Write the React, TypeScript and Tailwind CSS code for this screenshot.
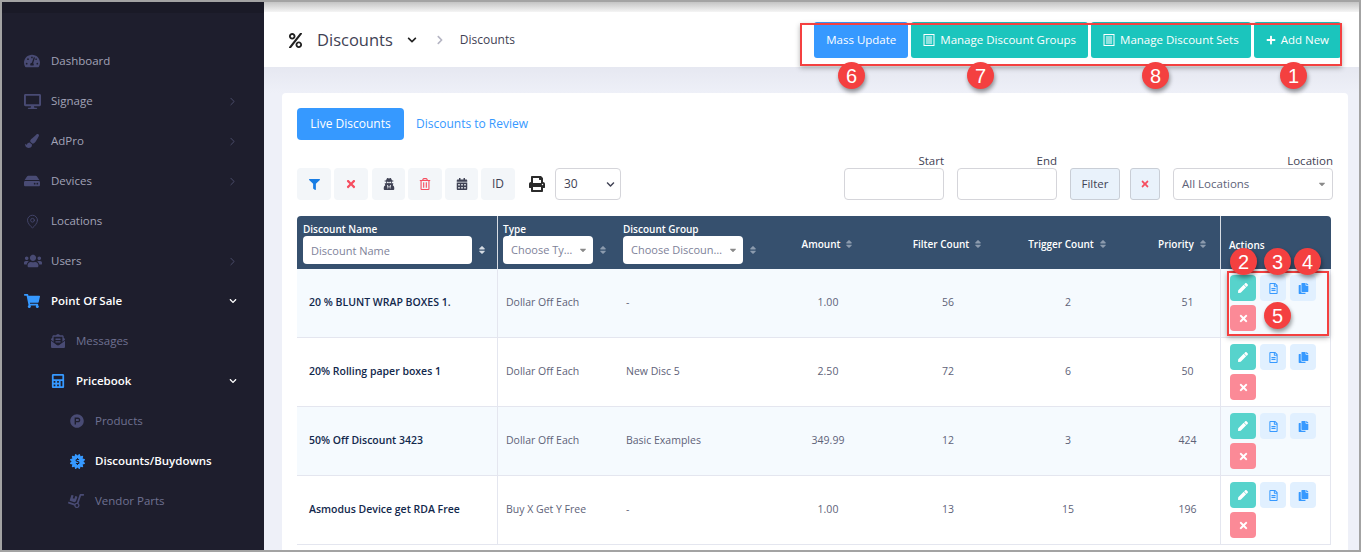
import type { ReactNode } from 'react';
import {
  FaCalculator,
  FaCalendarAlt,
  FaCaretDown,
  FaCertificate,
  FaChevronDown,
  FaChevronRight,
  FaCopy,
  FaDesktop,
  FaDollarSign,
  FaDolly,
  FaEnvelopeOpenText,
  FaFilter,
  FaHdd,
  FaPaintBrush,
  FaPen,
  FaPercent,
  FaPlus,
  FaPrint,
  FaProductHunt,
  FaRegFileAlt,
  FaRegTrashAlt,
  FaShoppingCart,
  FaSort,
  FaTachometerAlt,
  FaTimes,
  FaUsers,
  FaUserSecret,
} from 'react-icons/fa';
import { ChevronRight, MapPin } from 'lucide-react';

const ListIcon = () => (
  <svg width="12" height="12" viewBox="0 0 12 12" fill="none" stroke="currentColor">
    <rect x="1" y="0.5" width="10" height="11" />
    <path d="M3 3h6M3 5h6M3 7h6M3 9h6" />
  </svg>
);

const Discount = () => (
  <span className="relative flex h-[15px] w-[15px] items-center justify-center text-[#3699ff]">
    <FaCertificate size={15} />
    <FaDollarSign size={7} className="absolute text-[#1a1a27]" />
  </span>
);

type NavProps = {
  icon: ReactNode;
  label: string;
  level?: 0 | 1 | 2;
  active?: boolean;
  bg?: string;
  arrow?: 'right' | 'down';
};

const NavItem = ({ icon, label, level = 0, active, bg = '', arrow }: NavProps) => {
  const pad = level === 0 ? 'pl-[22px]' : level === 1 ? 'pl-[49px]' : 'pl-[68px]';
  const iconBox = level === 0 ? 'w-[27px]' : 'w-[25px]';
  const color = active ? 'text-white font-semibold' : level === 0 ? 'text-[#a2a3b7]' : 'text-[#6f7191]';
  return (
    <div className={`flex h-10 items-center pr-[25px] text-[11.5px] ${pad} ${bg}}`}>
      <span className={`flex shrink-0 items-center ${iconBox}`}>{icon}</span>
      <span className={`flex-1 ${color}`}>{label}</span>
      {arrow === 'right' && <ChevronRight size={13} strokeWidth={1.2} className="text-[#62648a]" />}
      {arrow === 'down' && <FaChevronDown size={8} className="mr-[2px] text-white" />}
    </div>
  );
};

const Sidebar = () => {
  const dim = 'text-[#494b74]';
  return (
    <aside className="flex w-[262px] shrink-0 flex-col bg-[#1e1e2d]">
      <div className="h-[11px] bg-[#1a1a27]" />
      <div className="h-[28px]" />
      <NavItem label="Dashboard" icon={<FaTachometerAlt size={16} className={dim} />} />
      <NavItem label="Signage" arrow="right" icon={<FaDesktop size={17} className={dim} />} />
      <NavItem label="AdPro" arrow="right" icon={<FaPaintBrush size={14} className={`ml-[1px] ${dim}`} />} />
      <NavItem label="Devices" arrow="right" icon={<FaHdd size={16} className={dim} />} />
      <NavItem label="Locations" icon={<MapPin size={15} strokeWidth={1.3} className={`ml-[1px] ${dim}`} />} />
      <NavItem label="Users" arrow="right" icon={<FaUsers size={18} className={dim} />} />
      <NavItem
        label="Point Of Sale"
        active
        arrow="down"
        bg="bg-[#1a1a27]"
        icon={<FaShoppingCart size={16} className="text-[#3699ff]" />}
      />
      <NavItem level={1} label="Messages" icon={<FaEnvelopeOpenText size={14} className={dim} />} />
      <NavItem
        level={1}
        label="Pricebook"
        active
        arrow="down"
        bg="bg-[#1b1b28]"
        icon={<FaCalculator size={14} className="text-[#3699ff]" />}
      />
      <NavItem
        level={2}
        label="Products"
        bg="bg-[#1f1f2e]"
        icon={<FaProductHunt size={14} className={dim} />}
      />
      <NavItem level={2} label="Discounts/Buydowns" active bg="bg-[#1b1b28]" icon={<Discount />} />
      <NavItem level={2} label="Vendor Parts" icon={<FaDolly size={16} className={`-ml-[2px] -scale-x-100 ${dim}`} />} />
    </aside>
  );
};

const TopButton = ({ children, color }: { children: ReactNode; color: string }) => (
  <button className={`flex h-9 items-center gap-[5px] rounded-[3px] px-[12px] text-[11.5px] font-medium text-white ${color}`}>
    {children}
  </button>
);

const Header = () => (
  <header className="flex h-[54px] shrink-0 items-center justify-between bg-white pl-[24px] pr-[18px]">
    <div className="flex items-center text-[#3f4254]">
      <FaPercent size={15} className="mr-[14px] text-[#212121]" />
      <span className="text-[16.5px]">Discounts</span>
      <FaChevronDown size={10} className="ml-[14px] text-[#212121]" />
      <FaChevronRight size={10} className="ml-[18px] text-[#b5b5c3]" />
      <span className="ml-[15px] text-[12px]">Discounts</span>
    </div>
    <div className="flex items-center gap-[3px]">
      <TopButton color="bg-[#3699ff]">Mass Update</TopButton>
      <TopButton color="bg-[#1bc5bd]">
        <ListIcon />
        Manage Discount Groups
      </TopButton>
      <TopButton color="bg-[#1bc5bd]">
        <ListIcon />
        Manage Discount Sets
      </TopButton>
      <TopButton color="bg-[#1bc5bd]">
        <FaPlus size={10} />
        Add New
      </TopButton>
    </div>
  </header>
);

const Tool = ({ children, w = 'w-[34px]' }: { children: ReactNode; w?: string }) => (
  <button className={`flex h-8 items-center justify-center rounded-[4px] bg-[#f3f6f9] text-[#3f4254] ${w}`}>{children}</button>
);

const Toolbar = () => (
  <div className="mt-[28px] flex h-8 items-center">
    <div className="flex items-center gap-[3px]">
      <Tool><FaFilter size={11} className="text-[#187de4]" /></Tool>
      <Tool><FaTimes size={12} className="text-[#f64e60]" /></Tool>
      <Tool w="w-[33px] ml-[1px]"><FaUserSecret size={12} className="text-[#3f4254]" /></Tool>
      <Tool><FaRegTrashAlt size={12} className="text-[#f64e60]" /></Tool>
      <Tool w="w-[33px]"><FaCalendarAlt size={12} className="text-[#3f4254]" /></Tool>
      <Tool><span className="text-[12px] text-[#3f4254]">ID</span></Tool>
    </div>
    <FaPrint size={16} className="ml-[14px] text-[#2b2b2b]" />
    <div className="ml-[10px] flex h-8 w-[66px] items-center justify-between rounded-[4px] border border-[#d5d5da] pl-[8px] pr-[5px] text-[12px] text-[#3f4254]">
      30
      <FaChevronDown size={9} className="text-[#3f4254]" />
    </div>

    <div className="ml-auto flex items-end">
      <label className="relative block w-[100px]">
        <span className="absolute -top-[16px] right-0 text-[11.5px] text-[#3f4254]">Start</span>
        <input className="block h-8 w-full rounded-[4px] border border-[#d5d5da]" />
      </label>
      <label className="relative ml-[13px] block w-[100px]">
        <span className="absolute -top-[16px] right-0 text-[11.5px] text-[#3f4254]">End</span>
        <input className="block h-8 w-full rounded-[4px] border border-[#d5d5da]" />
      </label>
      <button className="ml-[13px] h-8 w-[50px] rounded-[3px] border border-[#c9ced6] bg-[#e9f2fb] text-[11.5px] text-[#3f4254]">Filter</button>
      <button className="ml-[10px] flex h-8 w-[30px] items-center justify-center rounded-[3px] border border-[#c9ced6] bg-[#e9f2fb]">
        <FaTimes size={10} className="text-[#f64e60]" />
      </button>
      <label className="relative ml-[13px] block w-[160px]">
        <span className="absolute -top-[16px] right-0 text-[11.5px] text-[#3f4254]">Location</span>
        <div className="flex h-8 items-center justify-between rounded-[4px] border border-[#d5d5da] pl-[8px] pr-[5px] text-[11.5px] text-[#5e6278]">
          All Locations
          <FaCaretDown size={10} className="text-[#8a8a8a]" />
        </div>
      </label>
    </div>
  </div>
);

const Sort = ({ light }: { light?: boolean }) => (
  <FaSort size={10} className={`shrink-0 ${light ? 'text-[#d5dbe3]' : 'text-[#8c9bae]'}`} />
);

const Chooser = ({ text, w }: { text: string; w: string }) => (
  <div className={`flex h-[28px] items-center justify-between rounded-[4px] bg-white pl-[8px] pr-[5px] text-[11px] font-normal text-[#7e8299] ${w}`}>
    <span className="truncate">{text}</span>
    <FaCaretDown size={10} className="ml-[3px] shrink-0 text-[#8a8a8a]" />
  </div>
);

const labelCls = 'text-[10px] leading-[13px] font-semibold text-white';

const HeadNum = ({ label }: { label: string }) => (
  <span className="inline-flex items-center gap-[4px] text-[10px] font-semibold text-white">
    {label}
    <Sort />
  </span>
);

type Row = { name: string; type: string; group: string; amount: string; filter: number; trigger: number; priority: number };

const rows: Row[] = [
  { name: '20 % BLUNT WRAP BOXES 1.', type: 'Dollar Off Each', group: '-', amount: '1.00', filter: 56, trigger: 2, priority: 51 },
  { name: '20% Rolling paper boxes 1', type: 'Dollar Off Each', group: 'New Disc 5', amount: '2.50', filter: 72, trigger: 6, priority: 50 },
  { name: '50% Off Discount 3423', type: 'Dollar Off Each', group: 'Basic Examples', amount: '349.99', filter: 12, trigger: 3, priority: 424 },
  { name: 'Asmodus Device get RDA Free', type: 'Buy X Get Y Free', group: '-', amount: '1.00', filter: 13, trigger: 15, priority: 196 },
];

const Actions = () => (
  <div className="flex w-[90px] flex-wrap gap-[4px]">
    <button className="flex h-[26px] w-[26px] items-center justify-center rounded-[4px] bg-[#57d3cc] text-white"><FaPen size={10} /></button>
    <button className="flex h-[26px] w-[26px] items-center justify-center rounded-[4px] bg-[#e1f0ff] text-[#3699ff]"><FaRegFileAlt size={11} /></button>
    <button className="flex h-[26px] w-[26px] items-center justify-center rounded-[4px] bg-[#e1f0ff] text-[#3699ff]"><FaCopy size={11} /></button>
    <button className="flex h-[26px] w-[26px] items-center justify-center rounded-[4px] bg-[#fb8a97] text-white"><FaTimes size={11} /></button>
  </div>
);

const DiscountTable = () => (
  <table className="mt-4 w-[1034px] table-fixed border-separate border-spacing-0 overflow-hidden rounded-t-[4px] text-[10.5px]">
    <colgroup>
      <col className="w-[201px]" />
      <col className="w-[119px]" />
      <col className="w-[151px]" />
      <col className="w-[120px]" />
      <col className="w-[120px]" />
      <col className="w-[120px]" />
      <col className="w-[93px]" />
      <col className="w-[110px]" />
    </colgroup>
    <thead>
      <tr className="h-[53px] bg-[#36506e]">
        <th className="border-r border-[#d8dde4] pl-[6px] text-left align-top">
          <div className={`mt-[7px] ${labelCls}`}>Discount Name</div>
          <div className="flex items-center gap-[5px]">
            <input placeholder="Discount Name" className="h-[28px] w-[169px] rounded-[4px] bg-white pl-[8px] text-[11px] font-normal placeholder:text-[#7e8299]" />
            <Sort light />
          </div>
        </th>
        <th className="pl-[5px] text-left align-top">
          <div className={`mt-[7px] ${labelCls}`}>Type</div>
          <div className="flex items-center gap-[5px]">
            <Chooser text="Choose Type" w="w-[90px]" />
            <Sort />
          </div>
        </th>
        <th className="pl-[6px] text-left align-top">
          <div className={`mt-[7px] ${labelCls}`}>Discount Group</div>
          <div className="flex items-center gap-[5px]">
            <Chooser text="Choose Discount Group" w="w-[120px]" />
            <Sort />
          </div>
        </th>
        <th className="pt-[4px]"><HeadNum label="Amount" /></th>
        <th className="pt-[4px]"><HeadNum label="Filter Count" /></th>
        <th className="pt-[4px]"><HeadNum label="Trigger Count" /></th>
        <th className="border-r border-[#d8dde4] pl-[18px] pt-[4px]"><HeadNum label="Priority" /></th>
        <th className={`pl-[8px] pt-[6px] text-left align-middle ${labelCls}`}>Actions</th>
      </tr>
    </thead>
    <tbody className="text-[#5e6278]">
      {rows.map((r, i) => (
        <tr key={r.name} className={`h-[69px] ${i % 2 === 0 ? 'bg-[#f5fafe]' : 'bg-white'}`}>
          <td className="border-r border-b border-[#e4e6ef] pl-[12px] font-semibold text-[#12284c]">{r.name}</td>
          <td className="border-b border-[#e4e6ef] pl-[8px]">{r.type}</td>
          <td className="border-b border-[#e4e6ef] pl-[9px]">{r.group}</td>
          <td className="border-b border-[#e4e6ef] text-center">{r.amount}</td>
          <td className="border-b border-[#e4e6ef] text-center">{r.filter}</td>
          <td className="border-b border-[#e4e6ef] text-center">{r.trigger}</td>
          <td className="border-r border-b border-[#e4e6ef] pl-[27px] text-center">{r.priority}</td>
          <td className="border-r border-b border-[#e4e6ef] pl-[9px]"><Actions /></td>
        </tr>
      ))}
    </tbody>
  </table>
);

// numbered callouts drawn over the screenshot
const Callout = ({ n, className }: { n: number; className: string }) => (
  <span className={`absolute flex h-[27px] w-[27px] items-center justify-center rounded-full bg-[#f44040] font-['Liberation_Sans',sans-serif] text-[20px] text-white shadow-[1px_3px_4px_rgba(0,0,0,0.4)] ${className}`}>
    {n}
  </span>
);

export default function App() {
  return (
    <div className="relative flex h-[552px] w-[1361px] overflow-hidden border-2 border-[#a3a3a3] bg-[#eef0f8] font-['Open_Sans',sans-serif]">
      <Sidebar />
      <main className="flex min-w-0 flex-1 flex-col">
        <div className="h-[10px] shrink-0 bg-gradient-to-b from-[#c4c4c4] to-[#f5f5f5]" />
        <div className="h-px shrink-0 bg-white" />
        <Header />
        <div className="h-[26px] shrink-0 bg-gradient-to-b from-[#e6e8f1] to-[#eef0f8]" />
        <div className="ml-[18px] mr-[11px] flex-1 rounded-t-[4px] bg-white px-[15px] pt-[15px]">
          <div className="flex h-8 items-center text-[12px]">
            <span className="flex h-8 w-[107px] items-center justify-center rounded-[4px] bg-[#3699ff] text-white">Live Discounts</span>
            <span className="ml-[12px] text-[#3699ff]">Discounts to Review</span>
          </div>
          <Toolbar />
          <DiscountTable />
        </div>
      </main>

      <div className="absolute left-[798px] top-[21px] h-[43px] w-[542px] border-2 border-[#f44040] shadow-[0_2px_5px_rgba(0,0,0,0.3)]" />
      <div className="absolute left-[1225px] top-[269px] h-[65px] w-[102px] border-2 border-[#f44040] shadow-[0_2px_5px_rgba(0,0,0,0.3)]" />
      <Callout n={6} className="left-[836px] top-[60px]" />
      <Callout n={7} className="left-[965px] top-[60px]" />
      <Callout n={8} className="left-[1140px] top-[60px]" />
      <Callout n={1} className="left-[1278px] top-[60px]" />
      <Callout n={2} className="left-[1228px] top-[246px]" />
      <Callout n={3} className="left-[1262px] top-[246px]" />
      <Callout n={4} className="left-[1292px] top-[246px]" />
      <Callout n={5} className="left-[1262px] top-[300px]" />
    </div>
  );
}
